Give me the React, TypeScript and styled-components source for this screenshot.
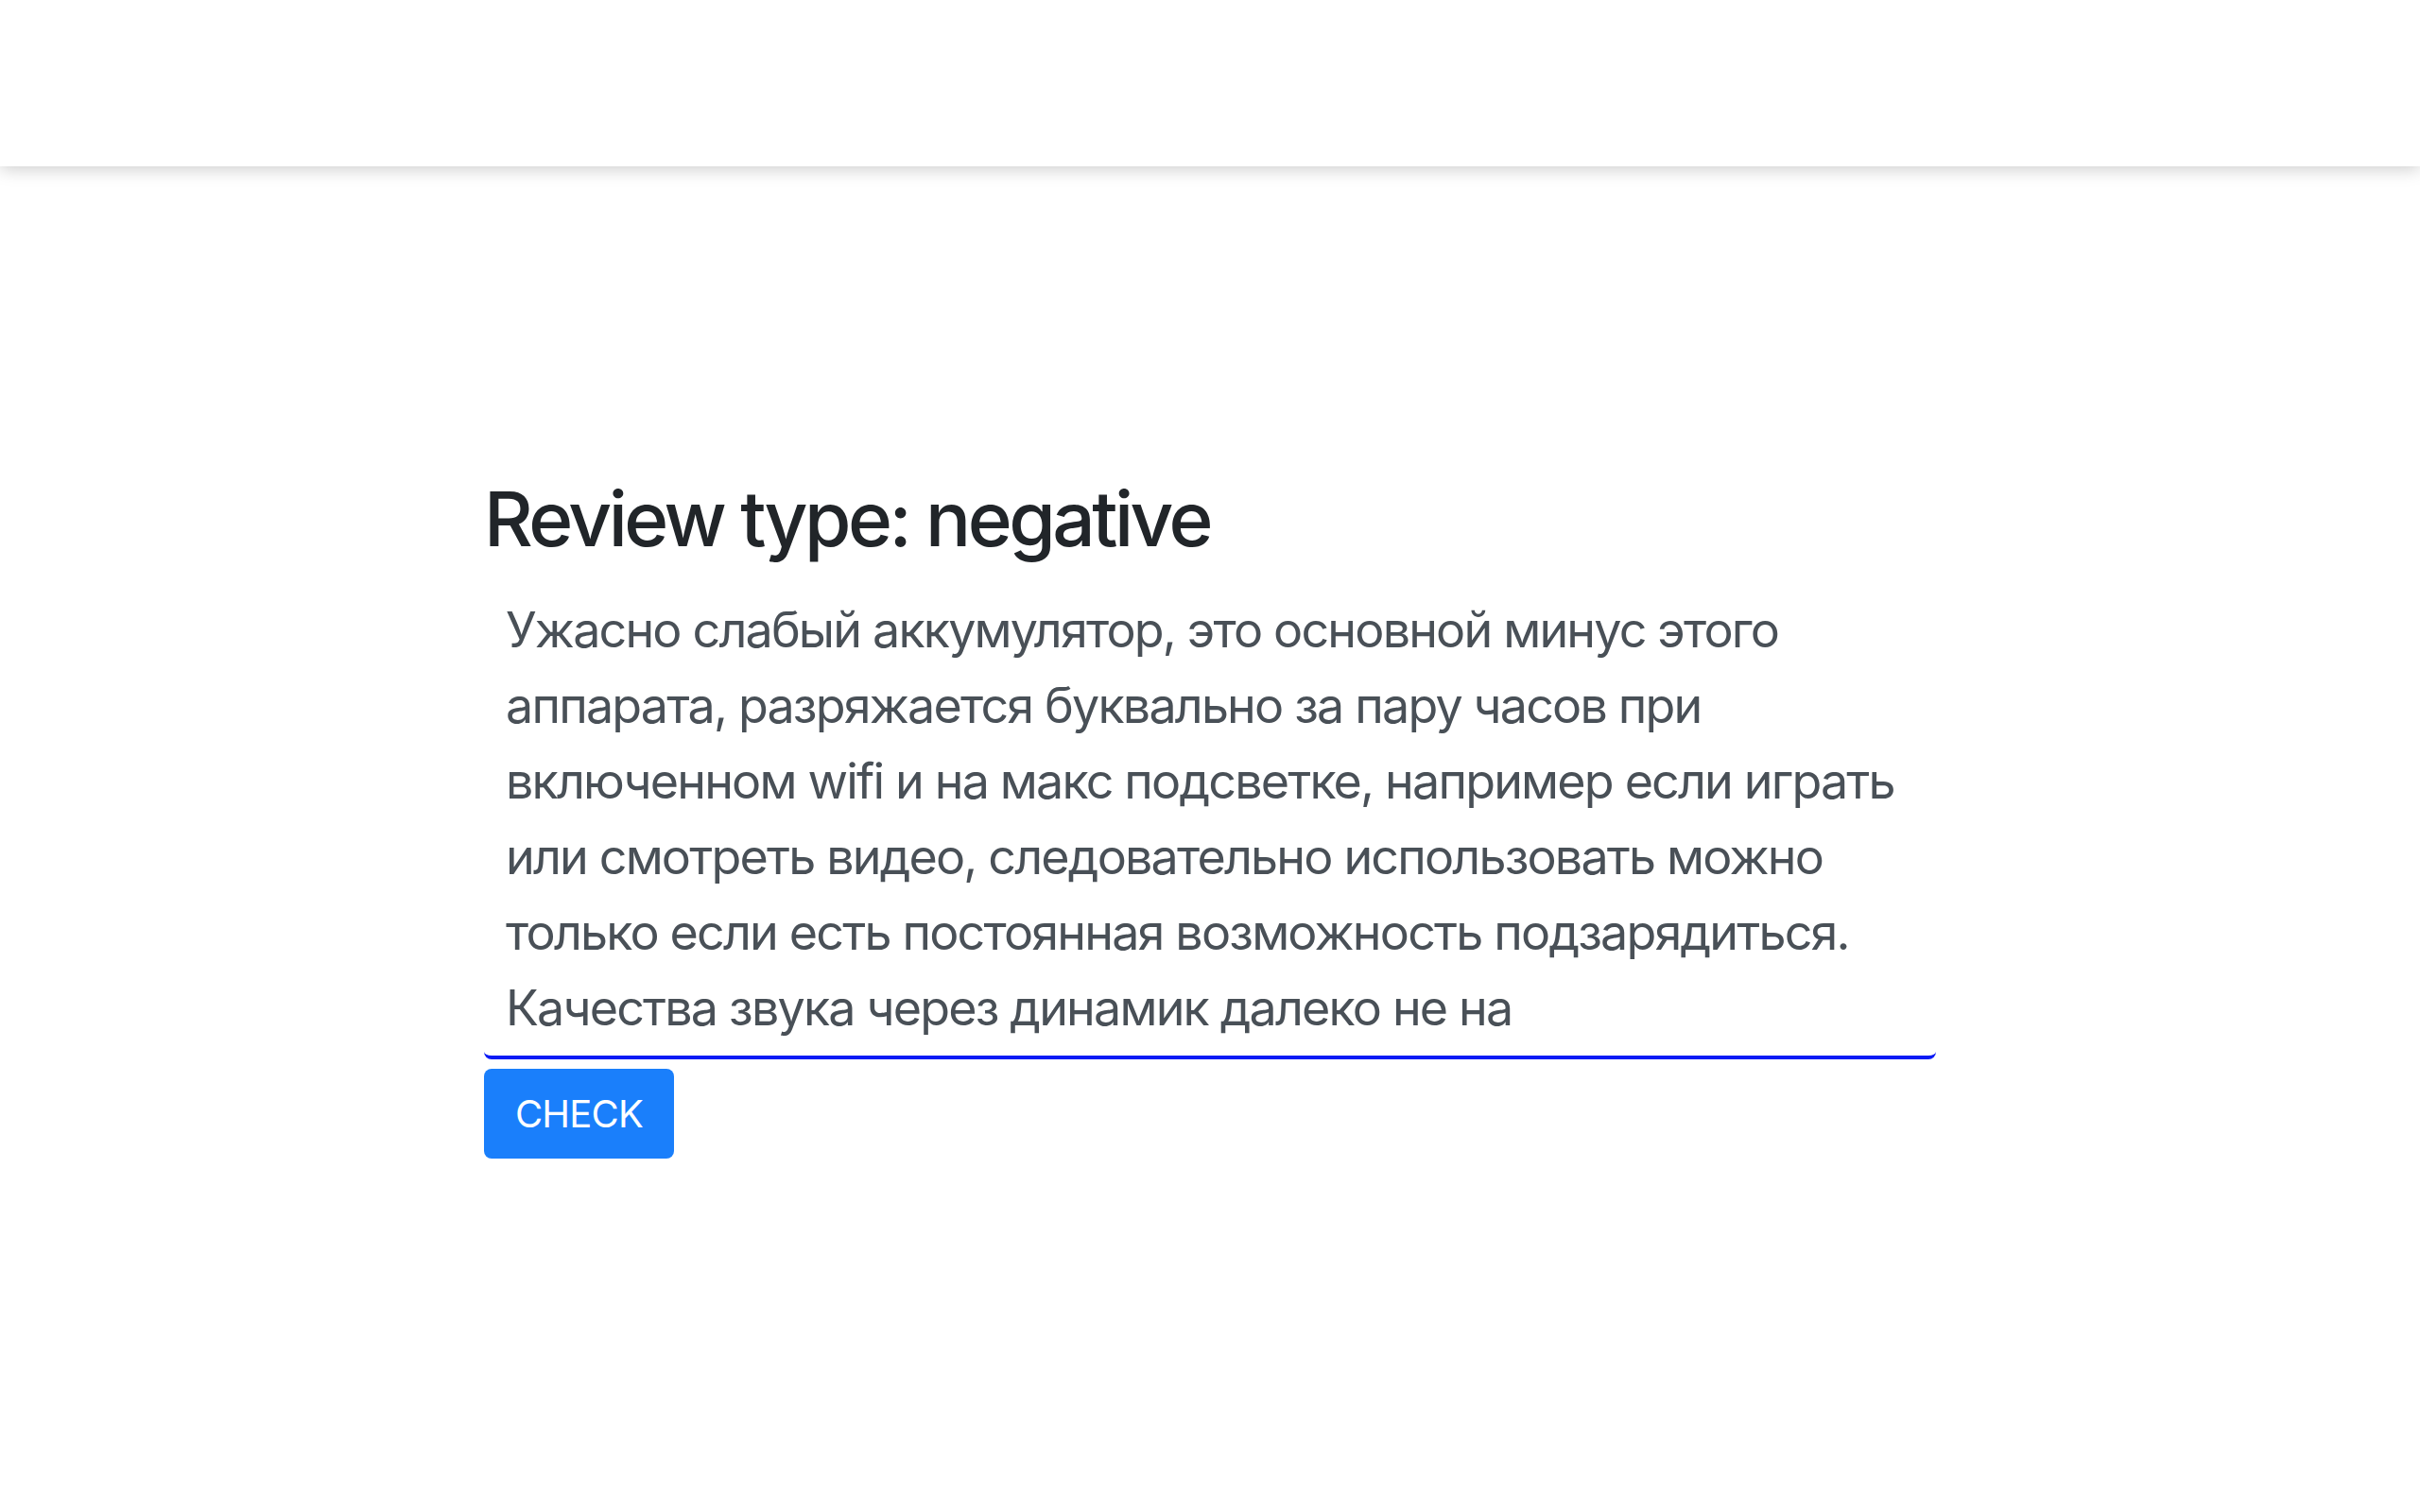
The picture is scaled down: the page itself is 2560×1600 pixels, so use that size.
import React from "react";
import styled, { createGlobalStyle } from "styled-components";

const Global = createGlobalStyle`
  html, body { margin: 0; padding: 0; background: #ffffff; }
  body { font-family: Inter, "Noto Sans", "Liberation Sans", sans-serif; }
  * { box-sizing: border-box; }
`;

const Header = styled.header`
  height: 176px;
  background: #ffffff;
  box-shadow: 0 2px 18px rgba(0, 0, 0, 0.22);
  position: relative;
  z-index: 1;
`;

const Main = styled.main`
  width: 1536px;
  margin: 325px auto 0;
  display: flex;
  flex-direction: column;
  align-items: flex-start;
`;

const Title = styled.h1`
  margin: 0 0 16px;
  font-size: 80px;
  line-height: 96px;
  font-weight: 500;
  color: #212529;
  letter-spacing: -3.5px;
`;

const Review = styled.textarea`
  width: 100%;
  height: 508px;
  padding: 14px 23px 12px;
  border: none;
  border-bottom: 4px solid #0a1af5;
  border-radius: 8px;
  font-family: Inter, "Noto Sans", "Liberation Sans", sans-serif;
  font-size: 52px;
  line-height: 80px;
  letter-spacing: -1.82px;
  color: #495057;
  background: #ffffff;
  resize: none;
  overflow: hidden;
  white-space: pre;
  outline: none;
`;

const CheckButton = styled.button`
  margin-top: 10px;
  width: 201px;
  height: 95px;
  border: none;
  border-radius: 8px;
  background: #1a7ffb;
  color: #ffffff;
  font-family: Inter, "Noto Sans", "Liberation Sans", sans-serif;
  font-size: 40px;
  font-weight: 400;
  letter-spacing: -0.8px;
  cursor: pointer;
`;

const reviewText = [
  "Ужасно слабый аккумулятор, это основной минус этого",
  "аппарата, разряжается буквально за пару часов при",
  "включенном wifi и на макс подсветке, например если играть",
  "или смотреть видео, следовательно использовать можно",
  "только если есть постоянная возможность подзарядиться.",
  "Качества звука через динамик далеко не на",
  "высоте, звук тихий и плоский.",
].join("\n");

export default function App() {
  return (
    <>
      <Global />
      <Header />
      <Main>
        <Title>Review type: negative</Title>
        <Review readOnly defaultValue={reviewText} />
        <CheckButton>CHECK</CheckButton>
      </Main>
    </>
  );
}
